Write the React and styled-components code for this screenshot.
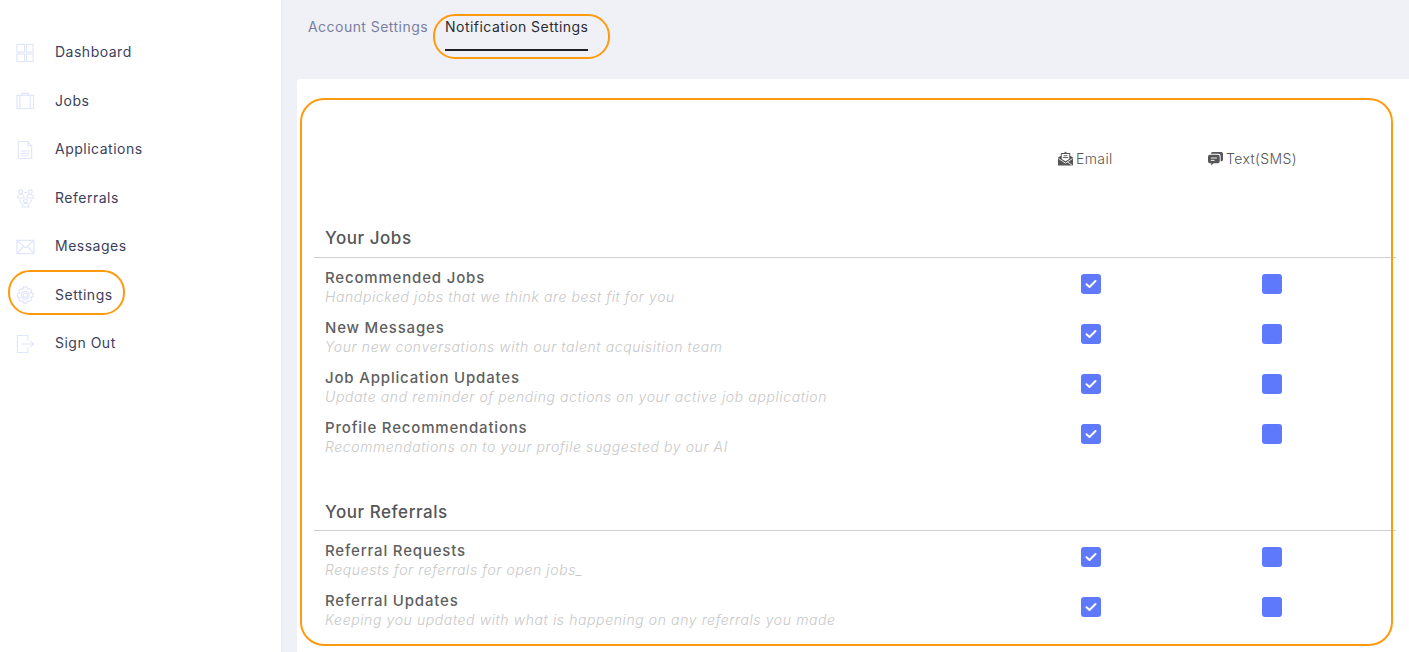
import React from "react";
import styled, { createGlobalStyle } from "styled-components";

const Global = createGlobalStyle`
  html, body { margin: 0; padding: 0; height: 100%; overflow: hidden; background: #f0f1f7; }
  body { font-family: Inter, "Liberation Sans", sans-serif; }
  * { box-sizing: border-box; }
`;

const Page = styled.div`
  display: flex;
  width: 1409px;
  height: 652px;
  overflow: hidden;
`;

const Sidebar = styled.nav`
  width: 282px;
  flex: none;
  background: #fff;
  border-right: 1px solid #e9eaf1;
  padding-top: 27.5px;
  display: flex;
  flex-direction: column;
`;

const NavItem = styled.div`
  position: relative;
  height: 48.5px;
  display: flex;
  align-items: center;
  padding-left: 16px;
  gap: 20px;
  font-size: 14px;
  letter-spacing: 0.5px;
  color: #3b3f5c;
`;

const NavIcon = styled.svg`
  width: 19px;
  height: 20px;
  margin-top: 2px;
  flex: none;
  fill: none;
  stroke: #dfe5fb;
  stroke-width: 1.2;
`;

const Ring = styled.span`
  position: absolute;
  border: 2px solid #ff9a0e;
  border-radius: ${(p) => p.$radius || 22}px;
  pointer-events: none;
  top: ${(p) => p.$top}px;
  left: ${(p) => p.$left}px;
  width: ${(p) => p.$w}px;
  height: ${(p) => p.$h}px;
`;

const Main = styled.main`
  flex: 1;
  min-width: 0;
  display: flex;
  flex-direction: column;
  padding-left: 15px;
`;

const Tabs = styled.div`
  height: 79px;
  flex: none;
  display: flex;
  align-items: flex-start;
  padding-left: 11px;
  gap: 17px;
`;

const Tab = styled.div`
  position: relative;
  height: 51px;
  padding-top: 18px;
  font-size: 14px;
  line-height: 18px;
  letter-spacing: 0.46px;
  white-space: nowrap;
  color: ${(p) => (p.$active ? "#2c2d33" : "#7a7f9f")};
  border-bottom: ${(p) => (p.$active ? "2px solid #1e1f24" : "2px solid transparent")};
`;

const Card = styled.section`
  position: relative;
  flex: 1;
  background: #fff;
  border-radius: 4px 0 0 0;
  padding-left: 17px;
`;

const HeadRow = styled.div`
  height: 136px;
  padding: 69px 0 0 744px;
  display: grid;
  grid-template-columns: 150px 150px;
  align-items: flex-start;
`;

const HeadCell = styled.div`
  display: flex;
  align-items: center;
  gap: 3px;
  height: 20px;
  font-size: 14px;
  font-weight: 300;
  letter-spacing: 0.4px;
  color: #555;
`;

const HeadIcon = styled.svg`
  width: 15px;
  height: 15px;
  fill: #555;
  flex: none;
`;

const Section = styled.div`
  width: 1082px;
  margin-bottom: ${(p) => p.$gap || 0}px;
`;

const SectionTitle = styled.h2`
  margin: 0;
  height: 43px;
  padding: ${(p) => p.$pad}px 0 0 11px;
  font-size: 17px;
  line-height: 22px;
  font-weight: 500;
  letter-spacing: 0.55px;
  color: #555;
  border-bottom: 1px solid #cfcfcf;
`;

const Row = styled.div`
  height: 50px;
  display: grid;
  grid-template-columns: 686px 181px 181px;
  align-items: center;
`;

const RowText = styled.div`
  padding: 7px 0 0 11px;
  display: flex;
  flex-direction: column;
`;

const RowTitle = styled.div`
  font-size: 15px;
  line-height: 20px;
  font-weight: 500;
  letter-spacing: 0.82px;
  color: #5f5f5f;
`;

const RowSub = styled.div`
  font-size: 14px;
  line-height: 18px;
  font-weight: 300;
  font-style: italic;
  letter-spacing: 0.6px;
  color: #c8c8c8;
  white-space: nowrap;
`;

const Check = styled.div`
  width: 20px;
  height: 20px;
  margin-top: 2px;
  justify-self: center;
  border-radius: 3px;
  background: #5f79fd;
  display: flex;
  align-items: center;
  justify-content: center;
`;

const nav = [
  ["Dashboard", <><rect x="1" y="1" width="8" height="8" /><rect x="11" y="1" width="7" height="8" /><rect x="1" y="11" width="8" height="8" /><rect x="11" y="11" width="7" height="8" /></>],
  ["Jobs", <><rect x="1" y="4" width="17.500" height="14" /><path d="M6 4V2h7v2M4 4v14M15 4v14" /></>],
  ["Applications", <><path d="M2.500 1h10l4 4.500V19h-14z" /><path d="M12.500 1v4.500h4M5 11h9M5 13.500h9M5 16h9" /></>],
  ["Referrals", <><circle cx="5" cy="3.500" r="2" /><circle cx="15" cy="3.500" r="2" /><circle cx="10" cy="13" r="2" /><path d="M1.500 10c0-2 1.500-4 3.500-4s3.500 2 3.500 4zM11.500 10c0-2 1.500-4 3.500-4s3.500 2 3.500 4zM6.500 19.500c0-2 1.500-4 3.500-4s3.500 2 3.500 4z" /><path d="M8.500 4.500q1.500-1 3 0M3.500 11.500q.5 3 3 4.500M16.500 11.500q-.5 3-3 4.500" /></>],
  ["Messages", <><rect x="1" y="3" width="18" height="14" /><path d="M1 3l9 8 9-8M1 17l6.500-7M19 17l-6.500-7" /></>],
  ["Settings", <><path d="M8 1.500h3.500l.6 2.400 2.200-.9 2.300 2.400-1.100 2.100 2.500.9v3.200l-2.500.9 1.100 2.200-2.300 2.300-2.200-1-.6 2.500H8l-.7-2.500-2.200 1-2.300-2.300 1.100-2.200L1.400 12V8.800l2.500-.9L2.800 5.800 5.100 3.400l2.200.9z" /><circle cx="9.700" cy="10.200" r="4.200" /><circle cx="9.700" cy="10.200" r="2.300" /></>],
  ["Sign Out", <><path d="M12.500 6V1H1.500v18h11v-5" /><path d="M6 10h12.500M15.500 7l3 3-3 3" /></>],
];

const groups = [
  { title: "Your Jobs", gap: 30, pad: 12, rows: [
    ["Recommended Jobs", "Handpicked jobs that we think are best fit for you"],
    ["New Messages", "Your new conversations with our talent acquisition team"],
    ["Job Application Updates", "Update and reminder of pending actions on your active job application"],
    ["Profile Recommendations", "Recommendations on to your profile suggested by our AI"],
  ]},
  { title: "Your Referrals", gap: 0, pad: 13, rows: [
    ["Referral Requests", "Requests for referrals for open jobs_"],
    ["Referral Updates", "Keeping you updated with what is happening on any referrals you made"],
  ]},
];

const Tick = () => (
  <svg width="12" height="10" viewBox="0 0 12 10" fill="none" stroke="#fff" strokeWidth="2" strokeLinecap="round" strokeLinejoin="round">
    <path d="M1.500 5.200 4.500 8l6-6" />
  </svg>
);

export default function App() {
  return (
    <Page>
      <Global />
      <Sidebar>
        {nav.map(([label, icon]) => (
          <NavItem key={label}>
            <NavIcon viewBox="0 0 20 20">{icon}</NavIcon>
            {label}
            {label === "Settings" && <Ring $top={0} $left={8} $w={117} $h={45} />}
          </NavItem>
        ))}
      </Sidebar>
      <Main>
        <Tabs>
          <Tab>Account Settings</Tab>
          <Tab $active>
            Notification Settings
            <Ring $top={14} $left={-12} $w={177} $h={45} />
          </Tab>
        </Tabs>
        <Card>
          <Ring $top={19} $left={3} $w={1093} $h={548} $radius={24} />
          <HeadRow>
            <HeadCell>
              <HeadIcon viewBox="0 0 16 16">
                <path d="M0 7l3-2V2h3.500L8 .5 9.500 2H13v3l3 2v8.500H0z" />
                <path d="M4 3.300h8v5.200L8 11 4 8.500z" fill="#fff" />
                <path d="M6 5h4M5 7h6" stroke="#555" strokeWidth="1" />
                <path d="M.5 8l7.500 5 7.500-5" stroke="#fff" strokeWidth=".9" fill="none" />
                <path d="M10 11.500l5.500 4" stroke="#fff" strokeWidth=".9" />
              </HeadIcon>
              Email
            </HeadCell>
            <HeadCell>
              <HeadIcon viewBox="0 0 16 16">
                <path d="M5 1h9a2 2 0 0 1 2 2v6a2 2 0 0 1-2 2h-.5V5.500a2.500 2.500 0 0 0-2.500-2.500H3a2 2 0 0 1 2-2z" />
                <path d="M2 4h8.500a2 2 0 0 1 2 2v5a2 2 0 0 1-2 2H6l-2.500 2.500V13H2a2 2 0 0 1-2-2V6a2 2 0 0 1 2-2z" />
                <path d="M3 7.500h6.500M3 10h4" stroke="#fff" strokeWidth="1" />
              </HeadIcon>
              Text(SMS)
            </HeadCell>
          </HeadRow>
          {groups.map((g) => (
            <Section key={g.title} $gap={g.gap}>
              <SectionTitle $pad={g.pad}>{g.title}</SectionTitle>
              {g.rows.map(([t, s]) => (
                <Row key={t}>
                  <RowText>
                    <RowTitle>{t}</RowTitle>
                    <RowSub>{s}</RowSub>
                  </RowText>
                  <Check><Tick /></Check>
                  <Check />
                </Row>
              ))}
            </Section>
          ))}
        </Card>
      </Main>
    </Page>
  );
}
